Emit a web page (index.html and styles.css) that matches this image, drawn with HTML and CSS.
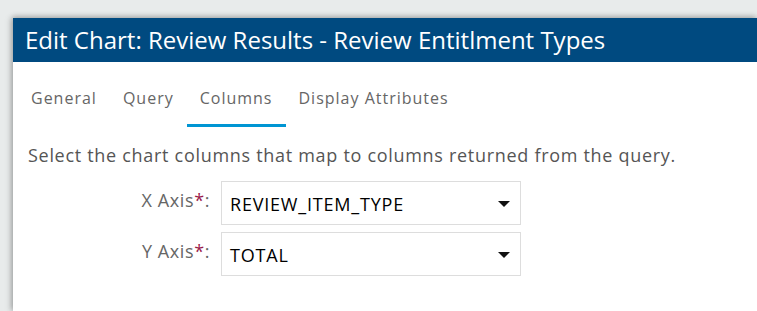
FILE: index.html
```html
<!DOCTYPE html>
<html>
<head>
<meta charset="utf-8">
<link rel="stylesheet" href="styles.css">
</head>
<body>
<div class="modal">
  <div class="modal-header">Edit Chart: Review Results - Review Entitlment Types</div>
  <div class="tabs">
    <div class="tab">General</div>
    <div class="tab">Query</div>
    <div class="tab active">Columns</div>
    <div class="tab">Display Attributes</div>
  </div>
  <div class="content">
    <p class="desc">Select the chart columns that map to columns returned from the query.</p>
    <div class="form">
      <div class="row">
        <label class="label">X Axis<span class="req">*</span>:</label>
        <div class="select"><span>REVIEW_ITEM_TYPE</span><span class="caret"></span></div>
      </div>
      <div class="row">
        <label class="label">Y Axis<span class="req">*</span>:</label>
        <div class="select"><span>TOTAL</span><span class="caret"></span></div>
      </div>
    </div>
  </div>
</div>
</body>
</html>
```
FILE: styles.css
```css
html, body { margin: 0; padding: 0; }
body {
  background: #e8ebeb;
  font-family: "Open Sans", sans-serif;
  width: 757px;
  height: 311px;
  overflow: hidden;
}
.modal {
  margin: 18px 0 0 13px;
  background: #fff;
  height: 293px;
  box-shadow: -2px 0 6px rgba(0,0,0,0.25), 0 -2px 5px rgba(0,0,0,0.15);
}
.modal-header {
  background: #004a80;
  color: #fff;
  height: 44px;
  line-height: 44px;
  font-size: 24px;
  padding-left: 12px;
  white-space: nowrap;
}
.tabs {
  display: flex;
  padding-left: 5px;
  height: 65px;
}
.tab {
  padding: 0 13px;
  font-size: 16px;
  color: #666;
  letter-spacing: 1px;
  line-height: 72px;
  border-bottom: 3px solid transparent;
  box-sizing: border-box;
  height: 65px;
}
.tab.active {
  border-bottom-color: #0095d3;
}
.content {
  padding: 0 15px;
}
.desc {
  margin: 16px 0 0 0;
  font-size: 18px;
  letter-spacing: 0.7px;
  color: #555;
  line-height: 24px;
  white-space: nowrap;
}
.form {
  margin-top: 14px;
  display: flex;
  flex-direction: column;
  gap: 7px;
}
.row {
  display: flex;
  align-items: flex-start;
}
.label {
  width: 182px;
  text-align: right;
  font-size: 18px;
  letter-spacing: 0.6px;
  color: #666;
  padding-right: 11px;
  line-height: 38px;
  white-space: nowrap;
}
.req { color: #9b1b4b; }
.select {
  width: 300px;
  height: 44px;
  border: 1px solid #ddd;
  box-sizing: border-box;
  display: flex;
  align-items: center;
  justify-content: space-between;
  padding: 2px 10px 0 8px;
  font-size: 18px;
  letter-spacing: 0.8px;
  color: #000;
}
.caret {
  width: 0; height: 0;
  border-left: 6px solid transparent;
  border-right: 6px solid transparent;
  border-top: 6px solid #111;
}
```
